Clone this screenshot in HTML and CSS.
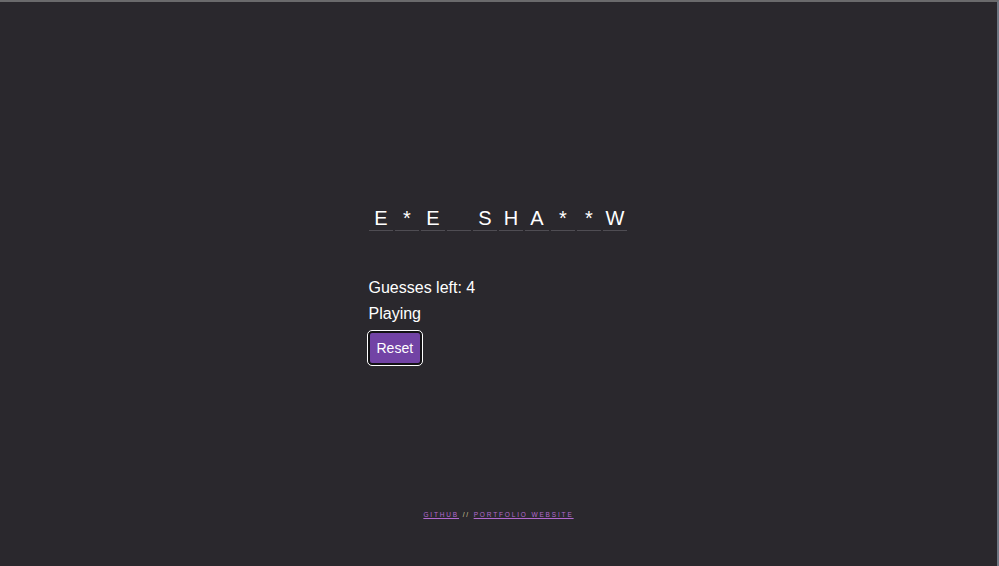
FILE: index.html
```html
<!DOCTYPE html>
<html>
<head>
<meta charset="utf-8">
<link rel="stylesheet" href="styles.css">
</head>
<body>
<div class="page">
  <main class="game">
    <div class="word">
      <span class="cell">E</span><span class="cell">*</span><span class="cell">E</span><span class="cell"></span><span class="cell">S</span><span class="cell">H</span><span class="cell">A</span><span class="cell">*</span><span class="cell">*</span><span class="cell">W</span>
    </div>
    <p class="info">Guesses left: 4</p>
    <p class="info">Playing</p>
    <button class="reset">Reset</button>
  </main>
  <footer class="footer">
    <a href="#" class="link">GitHub</a><span class="sep"> // </span><a href="#" class="link">Portfolio Website</a>
  </footer>
</div>
</body>
</html>
```
FILE: styles.css
```css
html, body {
  margin: 0;
  height: 100%;
}
body {
  background: #2a282d;
  font-family: "Liberation Sans", Arial, sans-serif;
  color: #fff;
  border-top: 2px solid #6a6a6c;
  border-right: 2px solid #6f7783;
  box-sizing: border-box;
  padding-top: 1px;
}
.page {
  height: 100%;
  display: flex;
  flex-direction: column;
  align-items: center;
}
.game {
  width: 260px;
  margin-top: 203px;
  display: flex;
  flex-direction: column;
  align-items: flex-start;
}
.word {
  display: flex;
  gap: 2px;
}
.cell {
  width: 24px;
  height: 24px;
  border-bottom: 1px solid #4f4d53;
  text-align: center;
  font-size: 20px;
  line-height: 24px;
  padding-left: 1px;
  box-sizing: content-box;
  width: 23px;
}
.info {
  margin: 0;
  font-size: 16px;
  line-height: 26px;
}
.word + .info {
  margin-top: 44px;
}
.reset {
  margin-top: 4px;
  margin-left: -1px;
  background: #7243a5;
  color: #fff;
  font-family: "Liberation Sans", Arial, sans-serif;
  font-size: 14px;
  padding: 7px 7px 7px 7px;
  border: 2px solid #121114;
  border-radius: 4px;
  outline: 1px solid #fff;
  outline-offset: 0;
  line-height: 16px;
}
.footer {
  margin-top: 146px;
  font-size: 6.5px;
  letter-spacing: 1.85px;
  text-transform: uppercase;
}
.link {
  color: #b36ad0;
  text-decoration: underline;
}
.sep {
  color: #d8cfa0;
}
```
